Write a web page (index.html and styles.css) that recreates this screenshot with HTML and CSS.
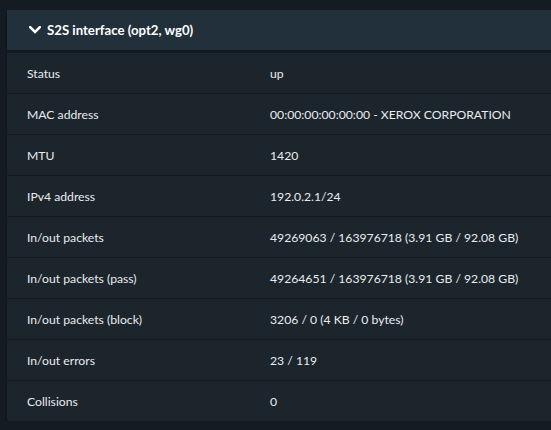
FILE: index.html
```html
<!DOCTYPE html>
<html lang="en">
<head>
    <meta charset="UTF-8">
    <title>Interface</title>
    <link rel="stylesheet" href="styles.css">
</head>
<body>

<!-- Panneau interface -->
<section class="panel">
    <div class="panel-heading">
        <svg class="chevron" viewBox="0 0 12 8" width="12" height="8">
            <path d="M1.2 1.2 L6 6 L10.8 1.2" fill="none" stroke="#fff" stroke-width="2.6" stroke-linecap="square"/>
        </svg>
        <span>S2S interface (opt2, wg0)</span>
    </div>
    <table class="info-table">
        <tbody>
            <tr><td>Status</td><td>up</td></tr>
            <tr><td>MAC address</td><td>00:00:00:00:00:00 - XEROX CORPORATION</td></tr>
            <tr><td>MTU</td><td>1420</td></tr>
            <tr><td>IPv4 address</td><td>192.0.2.1/24</td></tr>
            <tr><td>In/out packets</td><td>49269063 / 163976718 (3.91 GB / 92.08 GB)</td></tr>
            <tr><td>In/out packets (pass)</td><td>49264651 / 163976718 (3.91 GB / 92.08 GB)</td></tr>
            <tr><td>In/out packets (block)</td><td>3206 / 0 (4 KB / 0 bytes)</td></tr>
            <tr><td>In/out errors</td><td>23 / 119</td></tr>
            <tr><td>Collisions</td><td>0</td></tr>
        </tbody>
    </table>
</section>

</body>
</html>
```

FILE: styles.css
```css
body {
    font-family: 'Lato', 'Open Sans', sans-serif;
    font-size: 12.2px;
    margin: 0;
    padding: 10px 0 0 7px;
    background: #151b22;
    color: #e8ecef;
    overflow: hidden;
}

.panel {
    background: #1d252c;
    border-radius: 3px 0 0 3px;
    box-shadow: 0 1px 3px rgba(0, 0, 0, 0.5);
}

.panel-heading {
    display: flex;
    align-items: center;
    gap: 6px;
    height: 40px;
    padding-left: 22px;
    background: #22303b;
    border-bottom: 3px solid #141a20;
    font-weight: bold;
    font-size: 13.2px;
    color: #fff;
}

.chevron {
    display: block;
}

.info-table {
    width: 100%;
    border-collapse: collapse;
}

.info-table td {
    height: 40px;
    padding: 0 0 0 20px;
    border-bottom: 1px solid #151b21;
}

.info-table td:first-child {
    width: 223px;
}

.info-table tr:last-child td {
    border-bottom: none;
}
```
